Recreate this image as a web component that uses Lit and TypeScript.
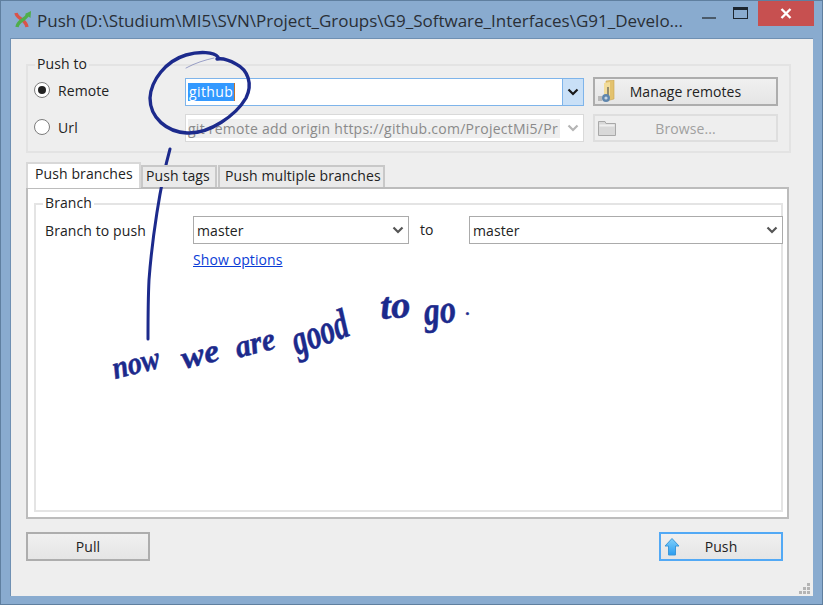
import { LitElement, html, css, svg } from 'lit'
import { customElement } from 'lit/decorators.js'

const chevron = (color: string) => html`
  <svg width="12" height="8" viewBox="0 0 12 8">
    <path d="M1.5 1.5 L6 6 L10.5 1.5" fill="none" stroke=${color} stroke-width="2.2" />
  </svg>
`

const appIcon = svg`
  <svg width="18" height="20" viewBox="0 0 18 20">
    <path d="M2 3 C3 9 12 9 13 17" fill="none" stroke="#d9534a" stroke-width="3.4" />
    <path d="M3 17 C4 10 12 10 14 4" fill="none" stroke="#4fae4a" stroke-width="3.4" />
    <path d="M11 4 L17 1 L16.5 8 Z" fill="#4fae4a" />
  </svg>
`

const remotesIcon = svg`
  <svg width="18" height="24" viewBox="0 0 18 24">
    <path d="M8 1 L16 0 L16 19 L8 21 Z" fill="#e3c26e" stroke="#c9a653" stroke-width="0.6" />
    <path d="M6 3 L12 2 L12 20 L6 20 Z" fill="#f2dc9a" />
    <path d="M10 7 L10 15" stroke="#6d6a5c" stroke-width="1.4" />
    <circle cx="8" cy="18" r="4" fill="#5f86ad" />
    <circle cx="8" cy="18" r="1.6" fill="#c8d6e4" />
    <rect x="0" y="16" width="4" height="5" fill="#b9b9b9" />
  </svg>
`

const folderIcon = svg`
  <svg width="18" height="16" viewBox="0 0 18 16">
    <path d="M0.5 1.5 H7 L8 3.5 H17.5 V15.5 H0.5 Z" fill="#d8d8d8" stroke="#a8a8a8" />
    <rect x="1.5" y="4.5" width="15" height="2" fill="#efefef" />
  </svg>
`

const pushIcon = svg`
  <svg width="16" height="19" viewBox="0 0 16 19">
    <defs>
      <linearGradient id="arrow" x1="0" y1="0" x2="0" y2="1">
        <stop offset="0" stop-color="#7fd0fb" />
        <stop offset="1" stop-color="#2b9df0" />
      </linearGradient>
    </defs>
    <path d="M8 1 L15 8.5 L11.5 8.5 L11.5 17.5 L4.5 17.5 L4.5 8.5 L1 8.5 Z" fill="url(#arrow)" stroke="#3d97d8" />
  </svg>
`

@customElement('app-root')
export class AppRoot extends LitElement {
  static styles = css`
    :host {
      display: block;
      width: 823px;
      height: 605px;
      position: relative;
      overflow: hidden;
      font-family: 'Open Sans', 'Noto Sans', sans-serif;
      font-size: 14px;
      letter-spacing: 0.1px;
      color: #222;
    }
    .frame {
      box-sizing: border-box;
      width: 823px;
      height: 605px;
      background: #89abcf;
      border: 1px solid #5f7f9f;
      padding: 0 9px 8px 9px;
      display: flex;
      flex-direction: column;
    }
    .titlebar {
      height: 37px;
      flex: none;
      display: flex;
      align-items: center;
      position: relative;
    }
    .app-icon {
      width: 18px;
      height: 20px;
      margin: 0 5px 0 4px;
      flex: none;
    }
    .title {
      font-size: 17px;
      letter-spacing: 0;
      color: #2a2f36;
      white-space: nowrap;
      padding-top: 2px;
    }
    .controls {
      margin-left: auto;
      margin-right: -1px;
      align-self: flex-start;
      display: flex;
      align-items: flex-start;
    }
    .min {
      width: 14px;
      height: 2px;
      background: #4a5a6a;
      margin: 16px 17px 0 0;
    }
    .max {
      box-sizing: border-box;
      width: 15px;
      height: 12px;
      border: 1px solid #1c2630;
      border-top-width: 3px;
      margin: 6px 10px 0 0;
    }
    .close {
      width: 56px;
      height: 25px;
      background: #c75050;
      display: flex;
      align-items: center;
      justify-content: center;
    }
    .body {
      flex: 1;
      background: #eeeeee;
      border: 1px solid #6f90b3;
      border-width: 1px 0 0 1px;
      padding: 25px 22px 0 15px;
      position: relative;
    }
    .group {
      box-sizing: border-box;
      border: 2px solid #e3e3e3;
      position: relative;
    }
    .legend {
      position: absolute;
      top: -11px;
      left: 7px;
      padding: 0 2px;
      line-height: 18px;
      background: inherit;
    }
    .push-to {
      height: 89px;
      background: #eeeeee;
      display: grid;
      grid-template-columns: 148px 399px 185px;
      column-gap: 9px;
      grid-template-rows: 28px 28px;
      row-gap: 9px;
      padding: 11px 0 0 0;
    }
    .radio-row {
      display: flex;
      align-items: center;
      padding-left: 6px;
      gap: 8px;
      position: relative;
      top: -1px;
    }
    .radio {
      box-sizing: border-box;
      width: 16px;
      height: 16px;
      border-radius: 50%;
      border: 1.5px solid #7c7c7c;
      background: #fff;
      display: flex;
      align-items: center;
      justify-content: center;
    }
    .radio.on::after {
      content: '';
      width: 8px;
      height: 8px;
      border-radius: 50%;
      background: #222;
    }
    .combo {
      box-sizing: border-box;
      height: 28px;
      display: flex;
      align-items: stretch;
      background: #fff;
      border: 1px solid #ababab;
    }
    .combo .value {
      flex: 1;
      display: flex;
      align-items: center;
      padding-left: 3px;
      white-space: nowrap;
      overflow: hidden;
      min-width: 0;
    }
    .combo .arrow {
      width: 20px;
      flex: none;
      display: flex;
      align-items: center;
      justify-content: center;
    }
    .combo.active {
      border: 1px solid #7eb4ea;
      position: relative;
      top: 1px;
    }
    .combo.active .value {
      padding-left: 2px;
    }
    .combo.active .arrow {
      background: #c9e0f7;
      border-left: 1px solid #7eb4ea;
    }
    .selected {
      background: #3399ff;
      color: #fff;
      padding: 0 1px;
      line-height: 18px;
      letter-spacing: 0.4px;
      border-right: 1px solid #c0712e;
    }
    .combo.disabled {
      border-color: #d9d9d9;
      color: #8a8a8a;
    }
    .combo.disabled .value {
      padding-left: 2px;
    }
    .combo.disabled .value span {
      background: #eeeeee;
      display: block;
      width: 372px;
      line-height: 19px;
      letter-spacing: 0.25px;
    }
    .button {
      box-sizing: border-box;
      height: 29px;
      border: 2px solid #adadad;
      background: linear-gradient(#f0f0f0, #e5e5e5);
      display: flex;
      align-items: center;
      position: relative;
      justify-content: center;
      color: #222;
    }
    .button .icon {
      position: absolute;
      left: 3px;
      top: 50%;
      transform: translateY(-50%);
      display: flex;
    }
    .button.disabled {
      border-color: #dedede;
      background: #eeeeee;
      color: #a0a0a0;
      height: 28px;
    }
    .tabs {
      display: flex;
      align-items: flex-end;
      margin-top: 9px;
      height: 25px;
      position: relative;
      z-index: 1;
    }
    .tab {
      box-sizing: border-box;
      height: 22px;
      display: flex;
      align-items: center;
      white-space: nowrap;
      padding: 0 3px 2px 3px;
      border: 2px solid #c8c8c8;
      border-bottom: 0;
      background: #eaeaea;
      line-height: 18px;
    }
    .tab.active {
      height: 26px;
      margin: 0 0 -1px 0;
      width: 115px;
      padding: 1px 0 0 7px;
      background: #fff;
      border-color: #d8d8d8;
      align-items: flex-start;
    }
    .tab.tags { width: 76px; }
    .tab.multi { width: 167px; margin-left: 1px; padding: 0 5px 2px 5px; }
    .pane {
      box-sizing: border-box;
      height: 332px;
      background: #fff;
      border: 2px solid #bcbcbc;
      padding: 14px 4px 5px 6px;
      margin-right: 2px;
    }
    .branch {
      box-sizing: border-box;
      height: 309px;
      background: #fff;
      border-color: #e4e4e4;
      padding: 11px 0 0 9px;
    }
    .branch-row {
      display: grid;
      grid-template-columns: 148px 216px 60px 314px;
      height: 28px;
      align-items: center;
    }
    .to {
      padding-left: 11px;
      position: relative;
      top: -1px;
    }
    .options {
      margin: 7px 0 0 148px;
      line-height: 18px;
      color: #0a3cd6;
      text-decoration: underline;
    }
    .footer {
      display: flex;
      justify-content: space-between;
      margin-top: 13px;
      padding-right: 8px;
    }
    .footer .button {
      width: 124px;
    }
    .button.default {
      border-color: #52a9f5;
    }
    .grip {
      position: absolute;
      right: 3px;
      bottom: 2px;
      width: 11px;
      height: 11px;
    }
    .ink {
      position: absolute;
      inset: 0;
      pointer-events: none;
    }
    .ink path {
      fill: none;
      stroke: #1c2a8c;
      stroke-linecap: round;
      stroke-linejoin: round;
    }
    .ink text {
      font-family: 'Liberation Serif', serif;
      font-style: italic;
      font-weight: bold;
      letter-spacing: 0;
      fill: #1c2a8c;
      stroke: #1c2a8c;
      stroke-width: 0.5px;
    }
  `

  render() {
    return html`
      <div class="frame">
        <div class="titlebar">
          <div class="app-icon">${appIcon}</div>
          <div class="title">Push (D:\\Studium\\MI5\\SVN\\Project_Groups\\G9_Software_Interfaces\\G91_Develo...</div>
          <div class="controls">
            <div class="min"></div>
            <div class="max"></div>
            <div class="close">
              <svg width="12" height="11" viewBox="0 0 12 11">
                <path d="M1.5 1 L10.5 10 M10.5 1 L1.5 10" stroke="#fff" stroke-width="2.4" />
              </svg>
            </div>
          </div>
        </div>
        <div class="body">
          <div class="group push-to">
            <div class="legend">Push to</div>
            <div class="radio-row"><span class="radio on"></span>Remote</div>
            <div class="combo active">
              <div class="value"><span class="selected">github</span></div>
              <div class="arrow">${chevron('#1a1a1a')}</div>
            </div>
            <div class="button">
              <span class="icon">${remotesIcon}</span>Manage remotes
            </div>
            <div class="radio-row"><span class="radio"></span>Url</div>
            <div class="combo disabled">
              <div class="value"><span>git remote add origin https://github.com/ProjectMi5/Pr</span></div>
              <div class="arrow">${chevron('#b5b5b5')}</div>
            </div>
            <div class="button disabled">
              <span class="icon">${folderIcon}</span>Browse...
            </div>
          </div>

          <div class="tabs">
            <div class="tab active">Push branches</div>
            <div class="tab tags">Push tags</div>
            <div class="tab multi">Push multiple branches</div>
          </div>
          <div class="pane">
            <div class="group branch">
              <div class="legend">Branch</div>
              <div class="branch-row">
                <div>Branch to push</div>
                <div class="combo">
                  <div class="value">master</div>
                  <div class="arrow">${chevron('#555')}</div>
                </div>
                <div class="to">to</div>
                <div class="combo">
                  <div class="value">master</div>
                  <div class="arrow">${chevron('#555')}</div>
                </div>
              </div>
              <div class="options">Show options</div>
            </div>
          </div>

          <div class="footer">
            <div class="button">Pull</div>
            <div class="button default">
              <span class="icon">${pushIcon}</span>Push
            </div>
          </div>

          <svg class="grip" viewBox="0 0 11 11">
            <g fill="#b4b4b4">
              <rect x="8" y="0" width="3" height="3" />
              <rect x="4" y="4" width="3" height="3" />
              <rect x="8" y="4" width="3" height="3" />
              <rect x="0" y="8" width="3" height="3" />
              <rect x="4" y="8" width="3" height="3" />
              <rect x="8" y="8" width="3" height="3" />
            </g>
          </svg>
        </div>
      </div>

      <!-- pen annotation on top of the dialog -->
      <svg class="ink" width="823" height="605" viewBox="0 0 823 605">
        <path stroke-width="3.4" d="M218 57 C214 52 200 51 186 55 C166 61 151 80 150 98 C150 118 167 132 187 133 C210 134 236 115 246 98 C253 84 248 70 236 64 C229 60 222 58 217 59" />
        <path stroke-width="1" opacity="0.4" d="M186 68 C195 63 205 60 214 58" />
        <path stroke-width="3" d="M170 149 C160 185 152 240 149 280 C148 300 148 320 148 339" />
        <text font-size="32" lengthAdjust="spacingAndGlyphs" textLength="48" transform="translate(115 379) rotate(-14)">now</text>
        <text font-size="32" lengthAdjust="spacingAndGlyphs" textLength="38" transform="translate(184 369) rotate(-14)">we</text>
        <text font-size="32" lengthAdjust="spacingAndGlyphs" textLength="40" transform="translate(238 358) rotate(-14)">are</text>
        <text font-size="42" lengthAdjust="spacingAndGlyphs" textLength="58" transform="translate(297 355) rotate(-20)">good</text>
        <text font-size="38" lengthAdjust="spacingAndGlyphs" textLength="30" transform="translate(381 319) rotate(-4)">to</text>
        <text font-size="40" lengthAdjust="spacingAndGlyphs" textLength="32" transform="translate(425 325) rotate(-6)">go</text>
        <text font-size="16" x="466" y="315">.</text>
      </svg>
    `
  }
}
